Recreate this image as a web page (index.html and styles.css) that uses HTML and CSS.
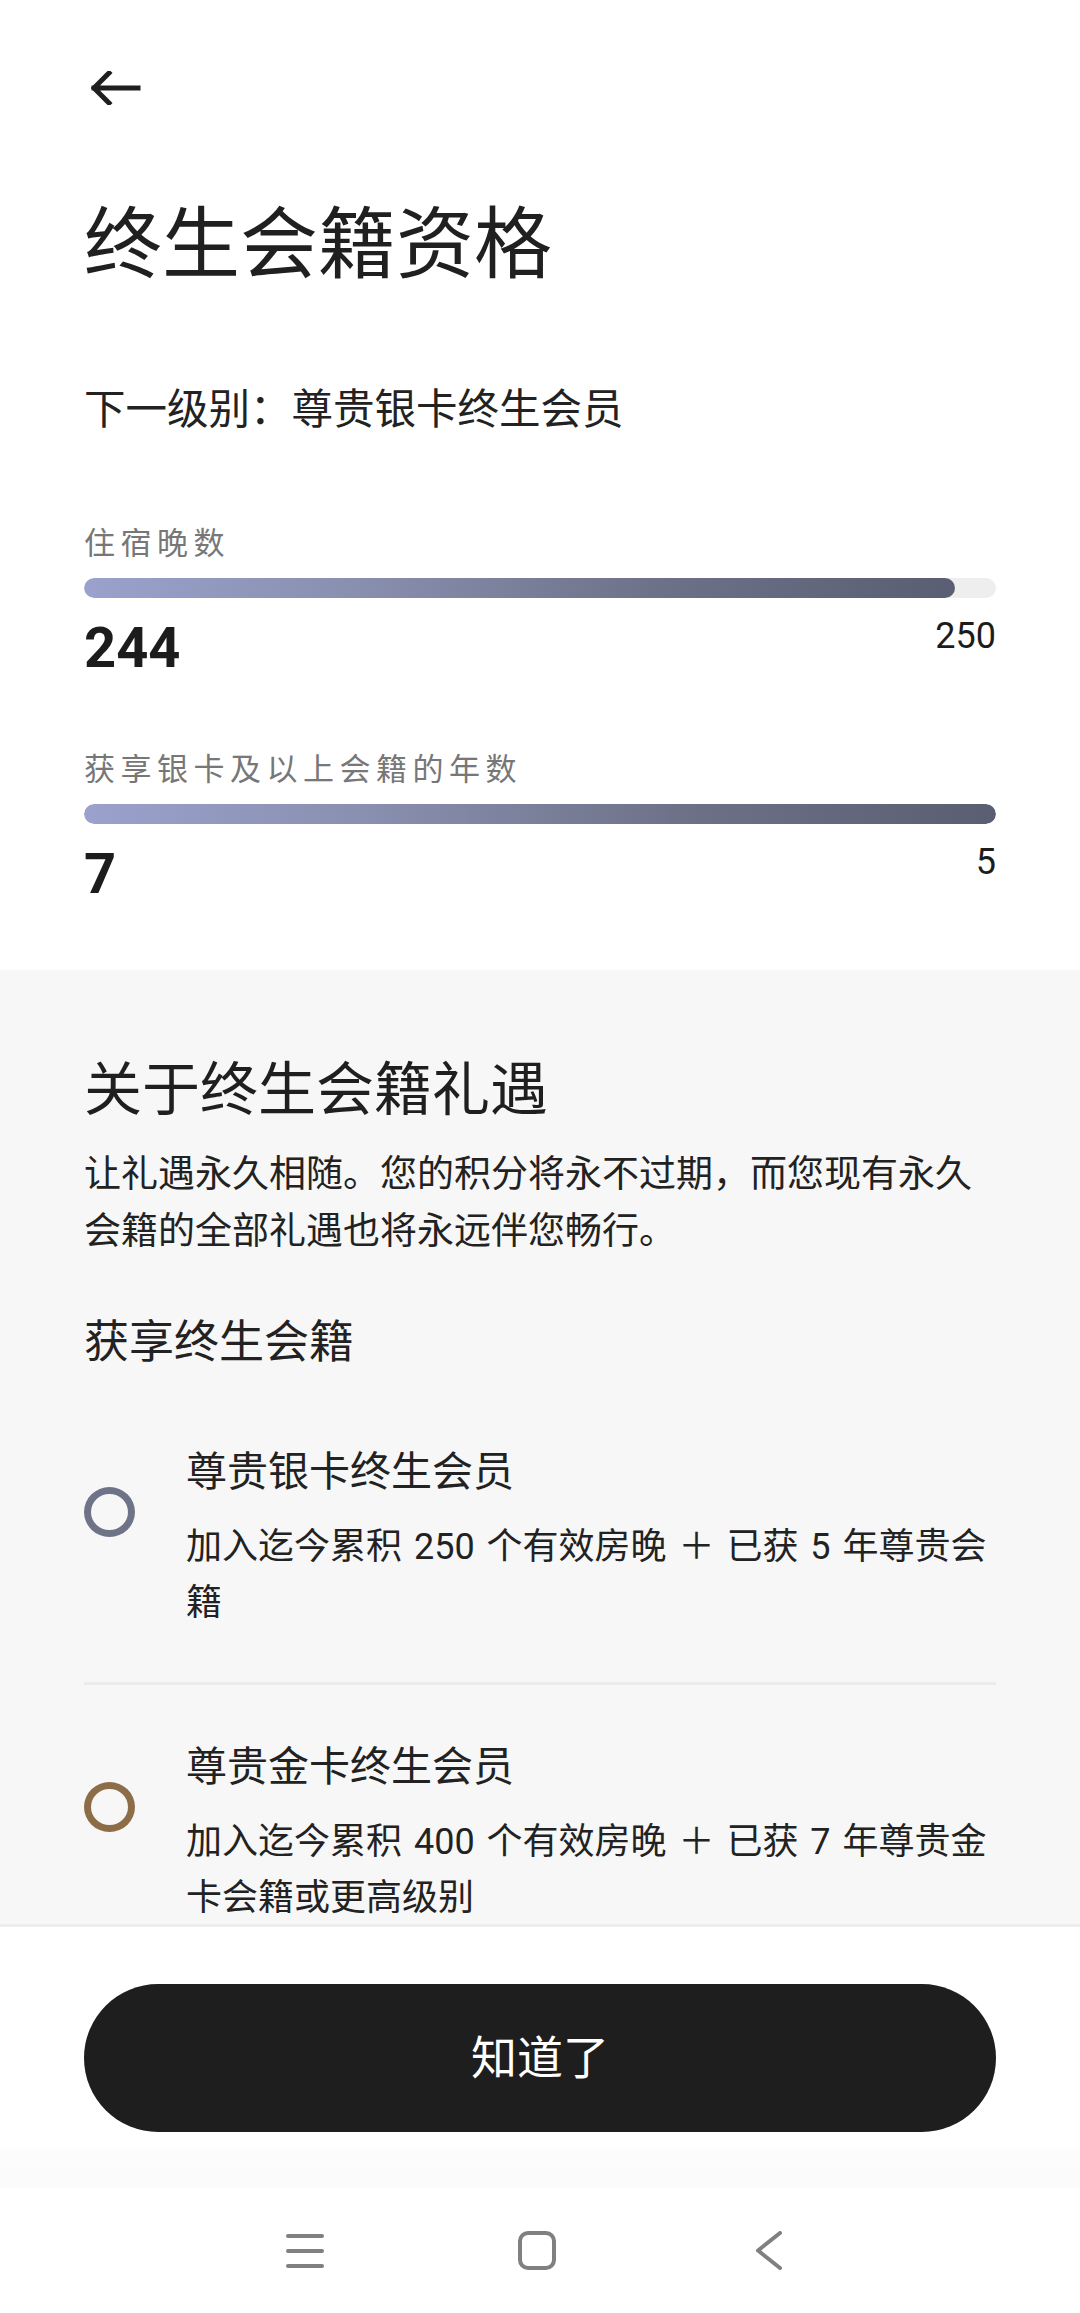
FILE: index.html
```
<!DOCTYPE html>
<html lang="zh-CN">
<head>
<meta charset="utf-8">
<link rel="stylesheet" href="styles.css">
</head>
<body>
<div class="page">
  <div class="scroll">
    <section class="top">
      <div class="back">
        <svg width="50" height="34" viewBox="0 0 50 34"><path d="M47 17H3M18 2L3 17l15 15" fill="none" stroke="#1f1f1f" stroke-width="5" stroke-linecap="square"/></svg>
      </div>
      <h1 class="title">终生会籍资格</h1>
      <p class="next">下一级别：尊贵银卡终生会员</p>

      <div class="metric m1">
        <div class="label">住宿晚数</div>
        <div class="track"><div class="fill" style="width:95.5%"></div></div>
        <div class="nums"><span class="cur">244</span><span class="goal">250</span></div>
      </div>

      <div class="metric m2">
        <div class="label">获享银卡及以上会籍的年数</div>
        <div class="track"><div class="fill" style="width:100%"></div></div>
        <div class="nums"><span class="cur">7</span><span class="goal">5</span></div>
      </div>
    </section>

    <section class="about">
      <h2 class="h2">关于终生会籍礼遇</h2>
      <p class="para">让礼遇永久相随。您的积分将永不过期，而您现有永久会籍的全部礼遇也将永远伴您畅行。</p>
      <h3 class="h3">获享终生会籍</h3>

      <div class="item">
        <span class="ring silver"></span>
        <div class="item-text">
          <div class="item-title">尊贵银卡终生会员</div>
          <div class="item-desc">加入迄今累积 250 个有效房晚 ＋ 已获 5 年尊贵会籍</div>
        </div>
      </div>
      <div class="item">
        <span class="ring gold"></span>
        <div class="item-text">
          <div class="item-title">尊贵金卡终生会员</div>
          <div class="item-desc">加入迄今累积 400 个有效房晚 ＋ 已获 7 年尊贵金卡会籍或更高级别</div>
        </div>
      </div>
    </section>
  </div>

  <footer class="footer">
    <button class="btn">知道了</button>
    <div class="fade"></div>
  </footer>

  <nav class="navbar">
    <span class="nav-icon">
      <svg width="40" height="40" viewBox="0 0 40 40"><path d="M3 5h34M3 20h34M3 35h34" stroke="#808080" stroke-width="4" stroke-linecap="round" fill="none"/></svg>
    </span>
    <span class="nav-icon">
      <svg width="40" height="40" viewBox="0 0 40 40"><rect x="3" y="2" width="34" height="35" rx="8" ry="8" stroke="#808080" stroke-width="4" fill="none"/></svg>
    </span>
    <span class="nav-icon">
      <svg width="40" height="40" viewBox="0 0 40 40"><path d="M31 2L9 19.5 31 37" stroke="#808080" stroke-width="4" stroke-linecap="round" stroke-linejoin="round" fill="none"/></svg>
    </span>
  </nav>
</div>
</body>
</html>
```
FILE: styles.css
```
* { box-sizing: border-box; }
html, body {
  margin: 0;
  padding: 0;
  background: #ffffff;
}
body {
  width: 1080px;
  height: 2313px;
  font-family: Roboto, "Noto Sans CJK SC", sans-serif;
  color: #1f1f1f;
  overflow: hidden;
}
.page {
  display: flex;
  flex-direction: column;
  height: 2313px;
}
.scroll {
  flex: 1;
  overflow: hidden;
}
.top {
  padding: 0 84px 68px;
  background: #ffffff;
}
.back {
  height: 176px;
  display: flex;
  align-items: center;
  padding-left: 7px;
}
.back svg { display: block; }
.title {
  margin: 31px 0 0;
  font-size: 78px;
  line-height: 78px;
  font-weight: 400;
  color: #202020;
}
.next {
  margin: 104px 0 0;
  font-size: 41.5px;
  line-height: 41px;
  color: #222;
}
.metric.m1 { margin-top: 99px; }
.metric.m2 { margin-top: 79px; }
.label {
  font-size: 31px;
  line-height: 30px;
  letter-spacing: 5.5px;
  color: #777777;
}
.track {
  margin-top: 19px;
  height: 20px;
  border-radius: 10px;
  background: #eeeeee;
  overflow: hidden;
}
.fill {
  height: 100%;
  border-radius: 10px;
  background: linear-gradient(90deg, #9aa2cd 0%, #8a90b0 30%, #6e7289 65%, #5a5e72 100%);
}
.nums {
  margin-top: 22px;
  display: flex;
  justify-content: space-between;
  align-items: flex-start;
}
.cur {
  font-size: 56px;
  line-height: 56px;
  font-weight: 700;
  color: #1c1c1c;
}
.goal {
  font-size: 36px;
  line-height: 36px;
  font-weight: 400;
  color: #1c1c1c;
  margin-top: -2px;
}
.about {
  background: #f7f7f7;
  padding: 91px 84px 0;
  min-height: 1200px;
}
.h2 {
  margin: 0;
  font-size: 58px;
  line-height: 58px;
  font-weight: 400;
  color: #1f1f1f;
}
.para {
  margin: 27px 0 0;
  font-size: 37px;
  line-height: 57px;
  color: #222;
}
.h3 {
  margin: 60px 0 28px;
  font-size: 45px;
  line-height: 45px;
  font-weight: 400;
  color: #222;
}
.item {
  display: flex;
  align-items: flex-start;
  gap: 51px;
  padding: 59px 0 51px;
}
.item + .item {
  border-top: 3px solid #ebebeb;
  padding-top: 62px;
}
.ring {
  flex: none;
  width: 51px;
  height: 50px;
  border-radius: 50%;
  border: 7px solid #6f7387;
  margin-top: 35px;
}
.ring.gold { border-color: #8c6d47; }
.item-text { flex: 1; min-width: 0; }
.item-title {
  font-size: 41px;
  line-height: 41px;
  color: #222;
}
.item-desc {
  margin-top: 26px;
  font-size: 36px;
  line-height: 56px;
  word-spacing: 3px;
  color: #222;
}
.footer {
  flex: none;
  border-top: 3px solid #ededed;
  background: #ffffff;
  padding: 57px 84px 0;
}
.btn {
  display: block;
  width: 100%;
  height: 148px;
  border: none;
  border-radius: 74px;
  background: #1e1e1e;
  color: #ffffff;
  font-family: Roboto, "Noto Sans CJK SC", sans-serif;
  font-size: 46px;
  line-height: 46px;
  padding: 0;
}
.fade {
  margin: 16px -84px 0;
  height: 40px;
  background: linear-gradient(180deg, #fdfdfd, #fbfbfb);
}
.navbar {
  flex: none;
  height: 125px;
  background: #ffffff;
  display: flex;
  justify-content: center;
  align-items: center;
  gap: 192px;
  padding-right: 6px;
}
.nav-icon svg { display: block; }
```
